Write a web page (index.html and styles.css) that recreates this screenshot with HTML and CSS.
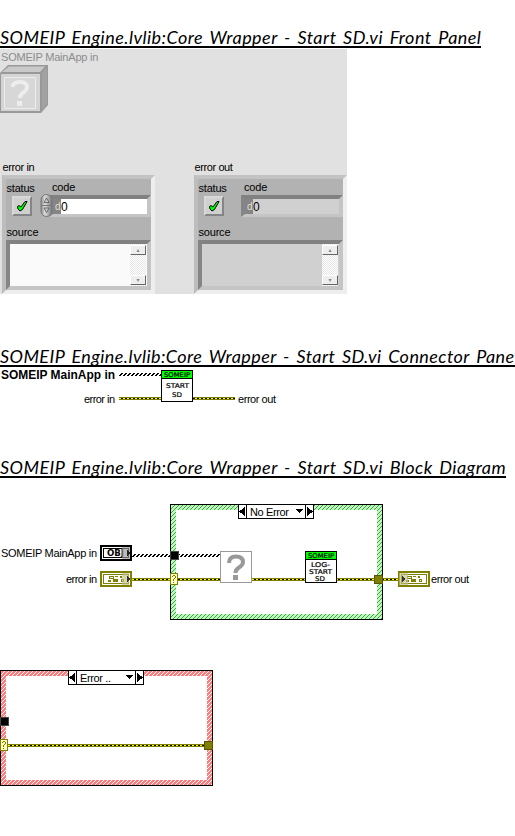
FILE: index.html
```html
<!DOCTYPE html>
<html lang="en">
<head>
<meta charset="utf-8">
<title>Core Wrapper - Start SD.vi</title>
<link rel="stylesheet" href="styles.css">
</head>
<body>
<svg class="defs" width="0" height="0">
  <defs>
    <pattern id="green" width="4" height="4" patternUnits="userSpaceOnUse"><rect width="4" height="4" fill="#b3ffb3"/><path d="M3 0h1v1h-1zM2 1h1v1h-1zM1 2h1v1h-1zM0 3h1v1h-1z" fill="#608c60"/></pattern>
    <pattern id="red" width="4" height="4" patternUnits="userSpaceOnUse"><rect width="4" height="4" fill="#ff7c7c"/><path d="M3 0h1v1h-1zM2 1h1v1h-1zM1 2h1v1h-1zM0 3h1v1h-1z" fill="#fff"/></pattern>
    <symbol id="check" viewBox="0 0 12 12"><path d="M1.5 6.5L3 5.5L5 7L9 1.5L11 1.5L6.500 9.500L4 11L2 9Z" fill="#0f0" stroke="#000"/></symbol>
    <symbol id="cluster" viewBox="0 0 32 16">
      <path d="M0 0h32v16H0z" fill="#808000"/><path d="M2 2h28v12H2z" fill="#fff"/>
      <path d="M3.500 3.500h25v9h-25z" fill="#fff" stroke="#808000"/>
      <path d="M9 5h5v3H9zM15 5h3v1h-3zM20 5h2v2h-2zM8 9h3v2H8zM13 8h5v3h-5zM21 8h3v3h-3z" fill="#808000"/><path d="M10 6h3v1h-3zM22 9h1v1h-1z" fill="#fff"/>
    </symbol>
    <symbol id="qtunnel" viewBox="0 0 8 12"><path d="M.5.5h7v11h-7z" fill="#ffffbf" stroke="#808000"/><path d="M2 3h1V2h2v1h1v2H5v1H4v2H3V6h1V5h1V3H3v1H2zM3 9h1v1H3z" fill="#808000"/></symbol>
  </defs>
</svg>

<main>
<section class="front">
  <h2>SOMEIP Engine.lvlib:Core Wrapper - Start SD.vi Front Panel</h2>
  <div class="panel">
    <div class="object-label">SOMEIP MainApp in</div>
    <svg class="object" width="48" height="48" viewBox="0 0 48 48">
      <path d="M0 8L8 0H48V40L41 48H0z" fill="#999"/>
      <path d="M2 7L9 1.500H45L40 7z" fill="#c9c9c9"/><path d="M42 8L47 2V39L42 45z" fill="#a2a2a2"/>
      <path d="M.5 8.500H40.500V46.500H.5z" fill="#d4d4d4" stroke="#999"/>
      <path d="M4.500 12.500h31v31h-31z" fill="#d7d7d7" stroke="#ededed"/>
      <path d="M12.500 22Q13 17 20 17Q27 17 27 22Q27 25 22.500 28Q20 30 20 33" fill="none" stroke="#ededed" stroke-width="4"/><path d="M17 36h5v5h-5z" fill="#ededed"/>
    </svg>
    <div class="clusters">
      <div class="item">
        <div class="label name">error in</div>
        <div class="cluster">
          <div class="row">
            <div class="status"><div class="label">status</div><div class="led"><svg width="12" height="12"><use href="#check"/></svg></div></div>
            <div class="code"><div class="label">code</div>
              <div class="numeric">
                <svg width="13" height="23" viewBox="0 0 13 23"><defs><linearGradient id="metal"><stop stop-color="#888"/><stop offset=".35" stop-color="#ddd"/><stop offset="1" stop-color="#777"/></linearGradient></defs><rect x="1" y=".5" width="11" height="22" rx="5.500" fill="url(#metal)" stroke="#777"/><path d="M1 11.500h11" stroke="#777"/><path d="M4 8.500L6.500 4L9 8.500zM4 14L6.500 18.500L9 14z" fill="#ccc" stroke="#555" stroke-width=".8"/></svg>
                <div class="field"><span class="radix">d</span><span class="value">0</span></div>
              </div>
            </div>
          </div>
          <div class="label source-label">source</div>
          <div class="source"><div class="scroll"><i>▴</i><i>▾</i></div></div>
        </div>
      </div>
      <div class="item out">
        <div class="label name">error out</div>
        <div class="cluster">
          <div class="row">
            <div class="status"><div class="label">status</div><div class="led"><svg width="12" height="12"><use href="#check"/></svg></div></div>
            <div class="code"><div class="label">code</div>
              <div class="numeric"><div class="field"><span class="radix">d</span><span class="value">0</span></div></div>
            </div>
          </div>
          <div class="label source-label">source</div>
          <div class="source"><div class="scroll"><i>▴</i><i>▾</i></div></div>
        </div>
      </div>
    </div>
  </div>
</section>

<section class="connector">
  <h2>SOMEIP Engine.lvlib:Core Wrapper - Start SD.vi Connector Pane</h2>
  <svg class="canvas" width="515" height="40" viewBox="0 367 515 40">
    <text x="1" y="379" class="bold" textLength="114" lengthAdjust="spacingAndGlyphs">SOMEIP MainApp in</text>
    <text x="84" y="403" textLength="31">error in</text>
    <text x="238" y="403" textLength="38">error out</text>
    <g class="object-wire"><path d="M121 373.500H161"/><path d="M120 374.500H161"/><path d="M119 375.500H161"/></g>
    <g class="error-wire"><path class="casing" d="M119 398.500H235"/><path class="core" d="M119 398.500H235"/><path class="dash" d="M121 398.500H235"/></g>
    <path d="M161.500 370.500h31v31h-31z" fill="#fff" stroke="#000"/><path d="M162 371h30v7h-30z" fill="#0f0"/><path d="M162 378h30v1h-30z"/>
    <text x="164" y="377" class="tiny" textLength="26" lengthAdjust="spacingAndGlyphs">SOMEIP</text>
    <text x="166" y="388" class="tiny" textLength="23" lengthAdjust="spacingAndGlyphs">START</text>
    <text x="172" y="397" class="tiny" textLength="10" lengthAdjust="spacingAndGlyphs">SD</text>
  </svg>
</section>

<section class="block">
  <h2>SOMEIP Engine.lvlib:Core Wrapper - Start SD.vi Block Diagram</h2>
  <svg class="canvas" width="515" height="358" viewBox="0 478 515 358">
    <path d="M170 504h213v116H170z"/><path d="M171 505h211v114H171z" fill="url(#green)"/><path d="M176 510h201v104H176z" fill="#fff"/>
    <path d="M238.500 504.500h75v14h-75z" fill="#fff" stroke="#000"/><path d="M246 504h1v15h-1zM305 504h1v15h-1zM239 511.500l6-4.500v9zM313 511.500l-6-4.500v9zM295 509h8l-4 4z"/>
    <text x="250" y="516" textLength="39">No Error</text>
    <text x="1" y="557" textLength="96">SOMEIP MainApp in</text>
    <text x="66" y="583" textLength="31">error in</text>
    <text x="431" y="583" textLength="38">error out</text>
    <g class="object-wire"><path d="M134 554.500H220"/><path d="M133 555.500H220"/><path d="M132 556.500H220"/></g>
    <g class="error-wire"><path class="casing" d="M132 579.500H398"/><path class="core" d="M132 579.500H398"/><path class="dash" d="M134 579.500H398"/></g>
    <path d="M100 545h32v16h-32z"/><path d="M102.500 547.500h27v11h-27z" stroke="#fff"/><path d="M104 549h24v8h-24z" fill="#fff"/>
    <text x="107" y="556" class="obj" textLength="17" lengthAdjust="spacingAndGlyphs">OBJ</text>
    <path d="M122 547h8v12h-8z" fill="#999" opacity=".65"/><path d="M127 550l3 3-3 3z" fill="#222"/>
    <use href="#cluster" x="100" y="571" width="32" height="16"/><path d="M122 573h7v12h-7z" fill="#bfbf86" opacity=".65"/><path d="M127 575l3 4-3 4z" fill="#333"/>
    <path d="M170.500 551.500h8v8h-8z" stroke="#444"/><use href="#qtunnel" x="170" y="573" width="8" height="12"/>
    <path d="M220.500 551.500h31v31h-31z" fill="#fff" stroke="#999"/>
    <path d="M229 563Q229 556.500 236 556.500Q243 556.500 243 562Q243 565 239 567.500Q235.500 569.500 235.500 573" fill="none" stroke="#999" stroke-width="4" shape-rendering="auto"/><path d="M233 575h5v5h-5z" fill="#999"/>
    <path d="M305.500 551.500h31v31h-31z" fill="#fff" stroke="#000"/><path d="M306 552h30v7h-30z" fill="#0f0"/><path d="M306 559h30v1h-30z"/>
    <text x="308" y="558" class="tiny" textLength="26" lengthAdjust="spacingAndGlyphs">SOMEIP</text>
    <text x="311" y="567" class="tiny" textLength="19" lengthAdjust="spacingAndGlyphs">LOG-</text>
    <text x="309" y="574" class="tiny" textLength="23" lengthAdjust="spacingAndGlyphs">START</text>
    <text x="315" y="581" class="tiny" textLength="10" lengthAdjust="spacingAndGlyphs">SD</text>
    <path d="M374.500 575.500h8v8h-8z" fill="#808000" stroke="#555500"/>
    <use href="#cluster" x="398" y="571" width="32" height="16"/><path d="M399 573h9v12h-9z" fill="#bfbf86" opacity=".65"/><path d="M402 575l3 4-3 4z" fill="#333"/>

    <path d="M0 670h213v116H0z"/><path d="M1 671h211v114H1z" fill="url(#red)"/><path d="M6 676h201v104H6z" fill="#fff"/>
    <path d="M68.500 670.500h75v14h-75z" fill="#fff" stroke="#000"/><path d="M76 670h1v15h-1zM135 670h1v15h-1zM69 677.500l6-4.500v9zM143 677.500l-6-4.500v9zM125 675h8l-4 4z"/>
    <text x="80" y="682" textLength="31">Error ..</text>
    <g class="error-wire"><path class="casing" d="M8 745.500H205"/><path class="core" d="M8 745.500H205"/><path class="dash" d="M10 745.500H205"/></g>
    <path d="M.5 717.500h8v8h-8z" stroke="#444"/><use href="#qtunnel" x="0" y="739" width="8" height="12"/>
    <path d="M204.500 741.500h8v8h-8z" fill="#808000" stroke="#555500"/>
  </svg>
</section>
</main>
</body>
</html>
```
FILE: styles.css
```css
* { box-sizing: border-box; }
body { margin: 0; background: #fff; color: #000; font: 11px/14px "Liberation Sans", sans-serif; }
.defs { display: block; }
main { height: 836px; overflow: hidden; }
section { display: flex; flex-direction: column; align-items: flex-start; }
.front { padding-top: 24px; height: 343px; }
.connector { height: 111px; }
h2 { margin: 0; height: 24px; overflow: hidden; border-bottom: 2px solid #000; font: italic 400 18px/26px Lato, sans-serif; letter-spacing: .45px; word-spacing: 2px; white-space: nowrap; }
.front h2 { width: 481px; }
.connector h2 { width: 515px; letter-spacing: .42px; }
.block h2 { width: 506px; }

.panel { width: 347px; height: 245px; margin-top: 1px; background: #e1e1e1; }
.object-label { height: 16px; padding: 1px 0 0 1px; color: #8c8c8c; white-space: nowrap; letter-spacing: -.2px; }
.object { display: block; }
.clusters { display: flex; gap: 39px; padding: 47px 0 0 2px; }
.label { letter-spacing: -.2px; white-space: nowrap; }
.item { width: 153px; }
.name { height: 15px; letter-spacing: -.4px; padding-left: .5px; }
.cluster { height: 119px; padding: 2px 0 0; border: 4px solid; border-color: #c3c3c3 #eee #eee #bdbdbd; background: #b2b2b2; }
.row { display: flex; height: 44px; }
.status { width: 34px; }
.status .label { height: 15px; padding-left: .5px; }
.led { display: grid; place-items: center; width: 20px; height: 20px; margin-left: 6px; border: 2px solid; border-color: #d8d8d8 #858585 #858585 #d8d8d8; background: #d0d0d0; }
.code .label { height: 14px; padding-left: 12px; margin-top: -1px; }
.numeric { display: flex; }
.numeric svg { margin-right: -4px; z-index: 1; }
.field { display: flex; width: 102px; height: 22px; margin-top: 1px; border: 4px solid; border-color: #818181 #c5c5c5 #c5c5c5 #858585; border-bottom-width: 3px; background: #fff; font-size: 12px; line-height: 16px; }
.radix { width: 8px; height: 15px; padding-left: 2px; background: #858585; color: #ddd; font-size: 10px; }
.out .field { margin-left: 9px; background: #d0d0d0; }
.source-label { height: 15px; padding-left: .5px; }
.source { display: flex; justify-content: flex-end; width: 145px; height: 50px; padding-right: 1px; border: 4px solid; border-color: #818181 #c5c5c5 #c5c5c5 #858585; background: #fafafa; }
.out .source { background: #d0d0d0; }
.scroll { display: flex; flex-direction: column; justify-content: space-between; width: 16px; padding: 1px 0; background: repeating-conic-gradient(#fff 0 25%, #e6e6e6 0 50%) 0 0 / 2px 2px; }
.scroll i { height: 10px; border: 1px solid; border-color: #fff #666 #666 #fff; background: #eee; color: #888; font: 6px/8px "DejaVu Sans", sans-serif; text-align: center; }

.canvas { display: block; shape-rendering: crispEdges; }
.canvas text { font-size: 11px; fill: #000; }
.canvas .bold { font-size: 12px; font-weight: 700; }
.canvas .tiny { font: 6.500px "DejaVu Sans", sans-serif; stroke: #000; stroke-width: .2px; }
.canvas .obj { font: 700 8px "DejaVu Sans", sans-serif; }
.object-wire path { stroke: #000; stroke-dasharray: 2 2; }
.error-wire .casing { stroke: #808000; stroke-width: 3; }
.error-wire .core { stroke: #ff0; }
.error-wire .dash { stroke: #000; stroke-dasharray: 2 2; }
```
